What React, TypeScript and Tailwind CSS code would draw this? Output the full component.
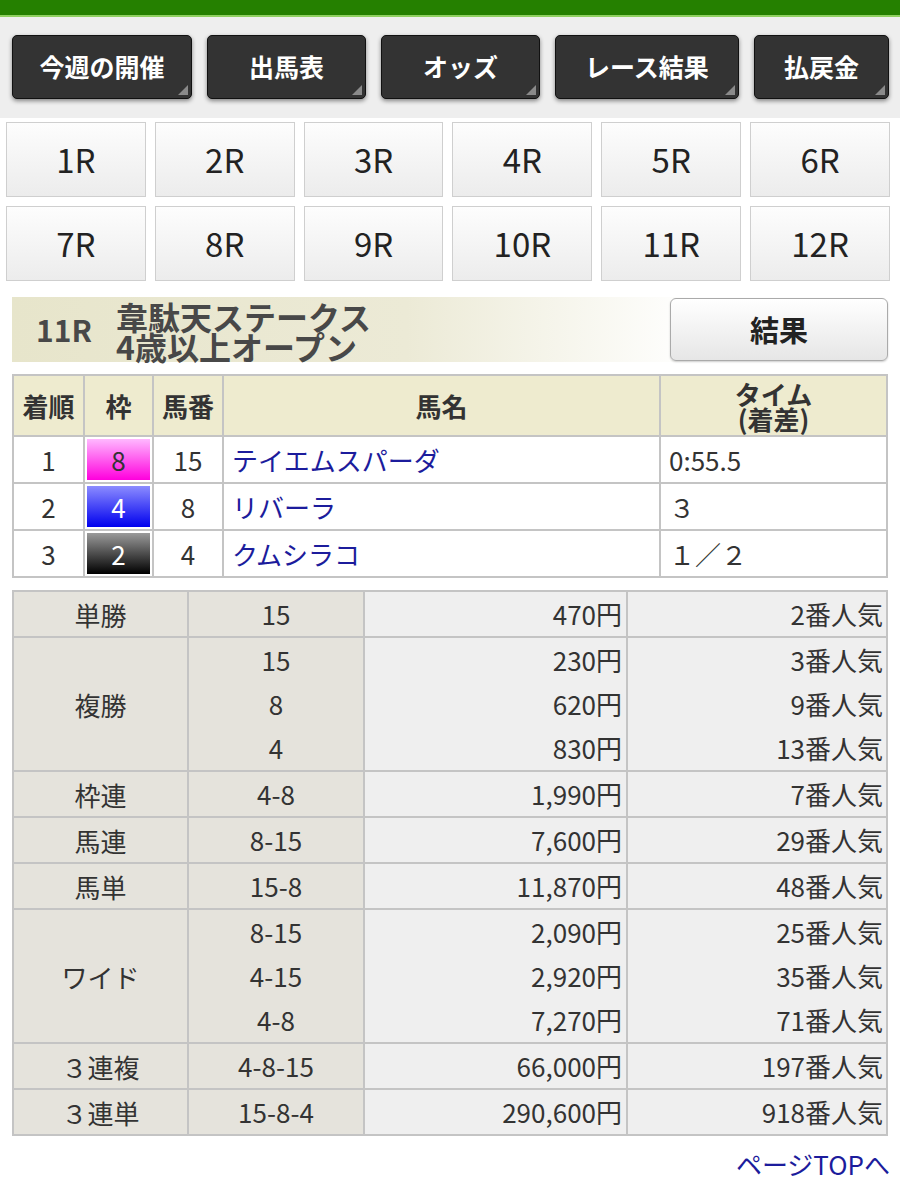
import React from "react";

const font = { fontFamily: '"Noto Sans CJK JP", "Noto Sans", sans-serif' };

const navs: { label: string; w: string }[] = [
  { label: "今週の開催", w: "w-[180px]" },
  { label: "出馬表", w: "w-[159px]" },
  { label: "オッズ", w: "w-[159px]" },
  { label: "レース結果", w: "w-[184px]" },
  { label: "払戻金", w: "w-[135px]" },
];

const races = ["1R", "2R", "3R", "4R", "5R", "6R", "7R", "8R", "9R", "10R", "11R", "12R"];

const results = [
  { pos: "1", waku: "8", wakuCls: "bg-[linear-gradient(#ffb8ff,#ff00dd)] text-[#333]", num: "15", name: "テイエムスパーダ", time: "0:55.5" },
  { pos: "2", waku: "4", wakuCls: "bg-[linear-gradient(#8c8cff,#0000ee)] text-white", num: "8", name: "リバーラ", time: "３" },
  { pos: "3", waku: "2", wakuCls: "bg-[linear-gradient(#9a9a9a,#000000)] text-white", num: "4", name: "クムシラコ", time: "１／２" },
];

const payouts: { type: string; lines: [string, string, string][] }[] = [
  { type: "単勝", lines: [["15", "470円", "2番人気"]] },
  { type: "複勝", lines: [["15", "230円", "3番人気"], ["8", "620円", "9番人気"], ["4", "830円", "13番人気"]] },
  { type: "枠連", lines: [["4-8", "1,990円", "7番人気"]] },
  { type: "馬連", lines: [["8-15", "7,600円", "29番人気"]] },
  { type: "馬単", lines: [["15-8", "11,870円", "48番人気"]] },
  { type: "ワイド", lines: [["8-15", "2,090円", "25番人気"], ["4-15", "2,920円", "35番人気"], ["4-8", "7,270円", "71番人気"]] },
  { type: "３連複", lines: [["4-8-15", "66,000円", "197番人気"]] },
  { type: "３連単", lines: [["15-8-4", "290,600円", "918番人気"]] },
];

export default function App() {
  return (
    <div className="w-[900px] min-h-[1200px] bg-white text-[#333]" style={font}>
      <div className="h-[15px] bg-[#258000]" />
      <div className="h-[2px] bg-[#8fd060]" />
      <div className="bg-[#eeeeee] flex gap-[15px] pl-[12px] pt-[18px] pb-[19px]">
        {navs.map((n) => (
          <div
            key={n.label}
            className={`${n.w} relative h-[64px] rounded-[5px] bg-[#333333] border border-[#111] shadow-[0_2px_4px_rgba(0,0,0,0.45)] flex items-center justify-center text-white font-bold text-[25px]`}
          >
            {n.label}
            <div className="absolute right-[3px] bottom-[3px] w-0 h-0 border-l-[10px] border-l-transparent border-b-[10px] border-b-[#8a8a8a]" />
          </div>
        ))}
      </div>

      <div className="grid grid-cols-6 gap-[9px] pl-[6px] pr-[10px] pt-[4px]">
        {races.map((r) => (
          <div
            key={r}
            className="h-[75px] border border-[#cfcfcf] bg-[linear-gradient(#fdfdfd,#ececec)] flex items-center justify-center text-[33px] text-[#222]"
          >
            {r}
          </div>
        ))}
      </div>

      <div className="mx-[12px] mt-[16px] flex items-center h-[65px] bg-[linear-gradient(to_right,#e7e5cb_0%,#ecead6_45%,#ffffff_78%)]">
        <div className="w-[104px] pl-[24px] text-[30px] font-bold text-[#484848]">11R</div>
        <div className="flex-1 text-[32px] leading-[30px] font-bold text-[#484848] pt-[2px]">
          <div>韋駄天ステークス</div>
          <div>4歳以上オープン</div>
        </div>
        <div className="w-[218px] h-[63px] rounded-[6px] border border-[#aaa] bg-[linear-gradient(#ffffff,#e6e6e6)] flex items-center justify-center text-[29px] font-bold text-[#222] shadow-[0_1px_2px_rgba(0,0,0,0.2)]">
          結果
        </div>
      </div>

      <table className="mx-[12px] mt-[12px] w-[876px] border-collapse text-[26px]">
        <thead>
          <tr className="bg-[#eeebcf] font-bold h-[61px]">
            <th className="border-2 border-[#c4c4c4] w-[71px] font-bold">着順</th>
            <th className="border-2 border-[#c4c4c4] w-[69px] font-bold">枠</th>
            <th className="border-2 border-[#c4c4c4] w-[70px] font-bold">馬番</th>
            <th className="border-2 border-[#c4c4c4] font-bold">馬名</th>
            <th className="border-2 border-[#c4c4c4] w-[227px] font-bold leading-[25px]">
              タイム
              <br />
              (着差)
            </th>
          </tr>
        </thead>
        <tbody>
          {results.map((r) => (
            <tr key={r.pos} className="h-[47px]">
              <td className="border-2 border-[#c4c4c4] text-center">{r.pos}</td>
              <td className="border-2 border-[#c4c4c4] p-[2px]">
                <div className={`${r.wakuCls} h-[41px] flex items-center justify-center`}>{r.waku}</div>
              </td>
              <td className="border-2 border-[#c4c4c4] text-center">{r.num}</td>
              <td className="border-2 border-[#c4c4c4] pl-[8px] text-[#1c1c9c]">{r.name}</td>
              <td className="border-2 border-[#c4c4c4] pl-[8px]">{r.time}</td>
            </tr>
          ))}
        </tbody>
      </table>

      <table className="mx-[12px] mt-[12px] w-[876px] border-collapse text-[26px]">
        <tbody>
          {payouts.map((p) => (
            <tr key={p.type}>
              <td className="border-2 border-[#c4c4c4] bg-[#e5e3dc] w-[175px] text-center align-middle">{p.type}</td>
              <td className="border-2 border-[#c4c4c4] bg-[#e5e3dc] w-[176px] text-center">
                {p.lines.map((l, i) => (
                  <div key={i} className="h-[44px] leading-[44px]">{l[0]}</div>
                ))}
              </td>
              <td className="border-2 border-[#c4c4c4] bg-[#efefef] w-[263px] text-right pr-[4px]">
                {p.lines.map((l, i) => (
                  <div key={i} className="h-[44px] leading-[44px]">{l[1]}</div>
                ))}
              </td>
              <td className="border-2 border-[#c4c4c4] bg-[#efefef] text-right pr-[3px]">
                {p.lines.map((l, i) => (
                  <div key={i} className="h-[44px] leading-[44px]">{l[2]}</div>
                ))}
              </td>
            </tr>
          ))}
        </tbody>
      </table>

      <div className="flex justify-end pr-[10px] pt-[8px] text-[26px] text-[#1c1c9c]">ページTOPへ</div>
    </div>
  );
}
